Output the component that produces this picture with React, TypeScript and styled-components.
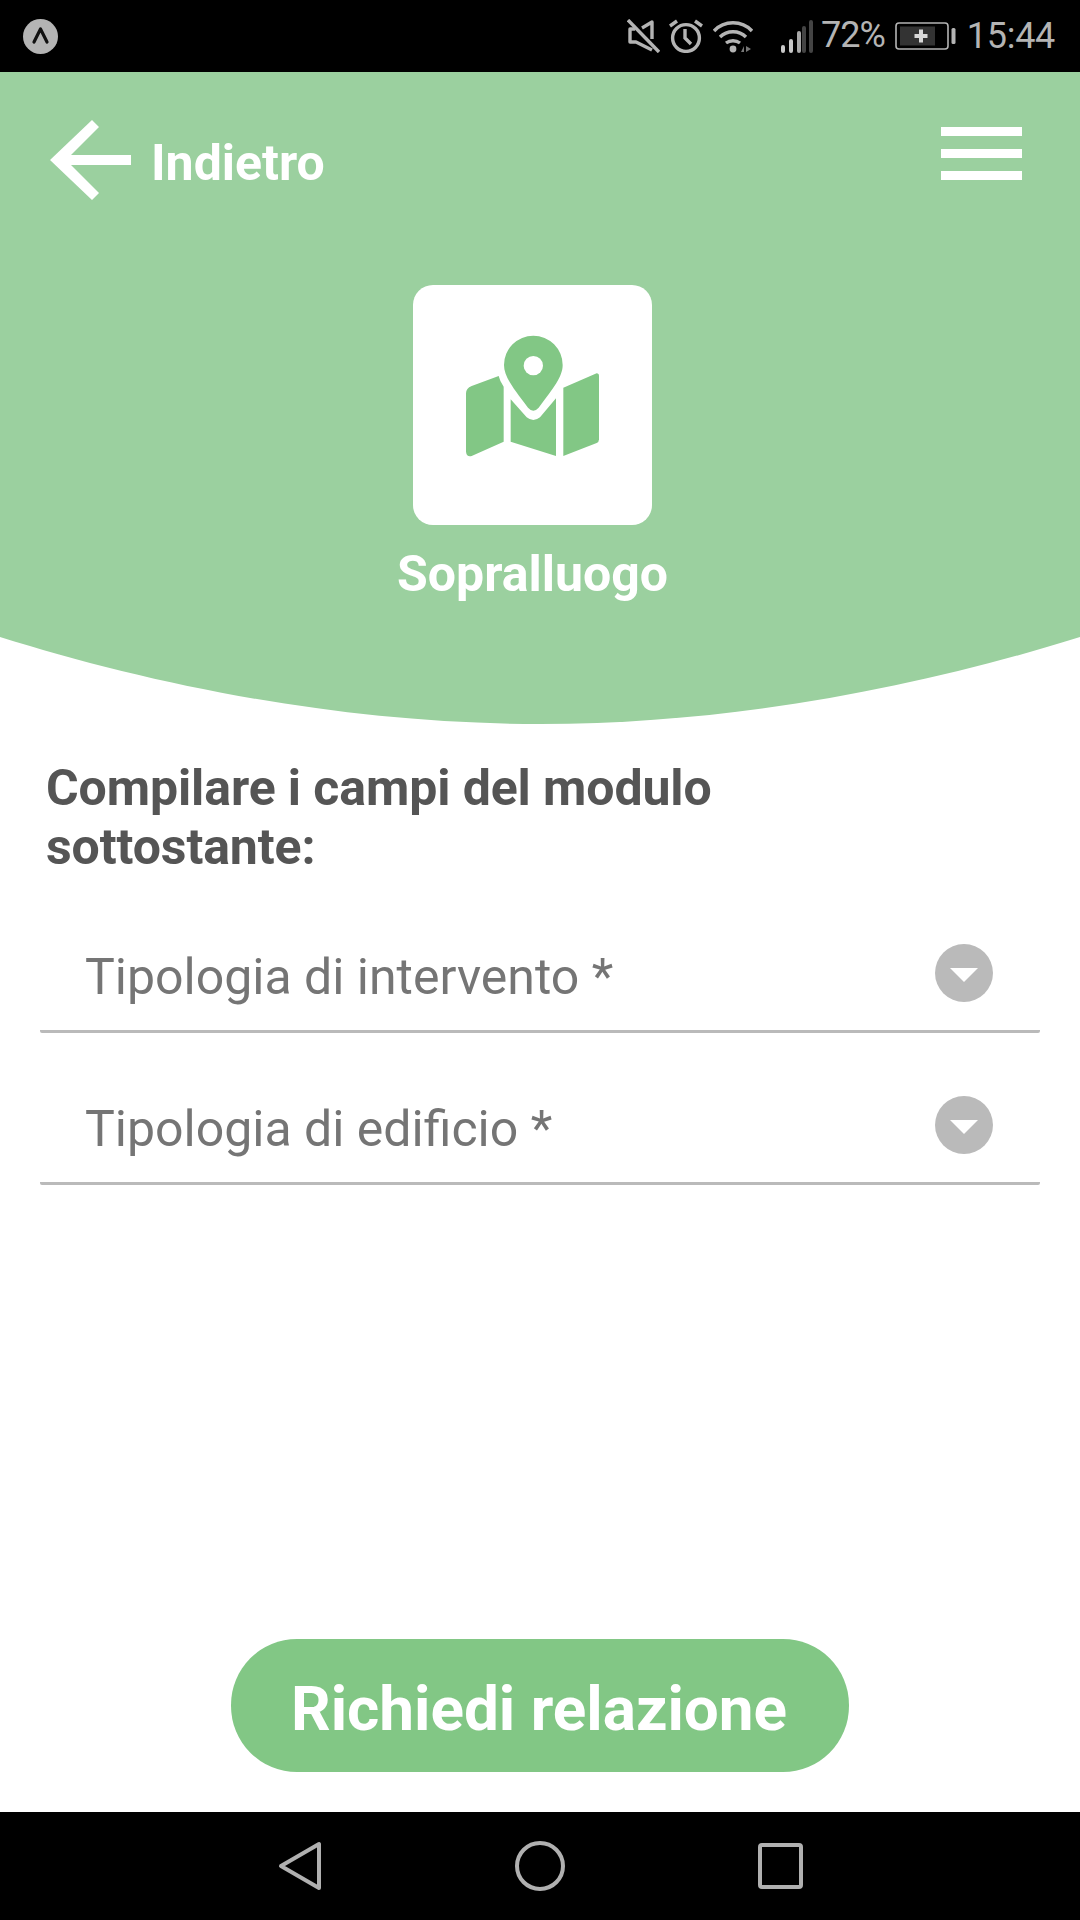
import { ReactElement } from "react";
import styled, { createGlobalStyle } from "styled-components";

const green = "#9bd09f";
const darkGreen = "#82c785";
const statusGrey = "#b4b4b4";

const GlobalStyle = createGlobalStyle`
    html, body {
        margin: 0;
        padding: 0;
        background: #fff;
    }
    * {
        box-sizing: border-box;
    }
`;

const Page = styled.div`
    width: 1080px;
    height: 1920px;
    display: flex;
    flex-direction: column;
    overflow: hidden;
    background: #fff;
    font-family: Roboto, "Liberation Sans", sans-serif;
`;

const StatusBar = styled.div`
    height: 72px;
    flex: none;
    background: #000;
    display: flex;
    align-items: center;
    justify-content: space-between;
    padding: 0 25px 0 23px;
`;

const StatusGroup = styled.div`
    display: flex;
    align-items: center;
`;

const StatusIcon = styled.svg<{ $gap?: number }>`
    display: block;
    flex: none;
    margin-right: ${(p) => p.$gap ?? 0}px;
`;

const Percent = styled.span`
    font-size: 36px;
    font-weight: 400;
    color: ${statusGrey};
    margin: -3px 10px 0 7px;
    letter-spacing: -1px;
`;

const Clock = styled.span`
    font-size: 36px;
    font-weight: 400;
    color: ${statusGrey};
    margin-left: 11px;
    letter-spacing: -0.3px;
`;

const Header = styled.header`
    flex: none;
    background: ${green};
    height: 565px;
    display: flex;
    flex-direction: column;
`;

const TopRow = styled.div`
    display: flex;
    align-items: flex-start;
    justify-content: space-between;
    padding: 48px 58px 0 50px;
    height: 128px;
`;

const BackLink = styled.div`
    display: flex;
    align-items: center;
    gap: 20px;
    height: 80px;
    color: #fff;
    font-size: 50px;
    line-height: 72px;
    font-weight: 700;
`;

const BackArrow = styled.svg`
    display: block;
    flex: none;
`;

const BackText = styled.span`
    display: block;
    margin-top: 6px;
`;

const MenuButton = styled.div`
    width: 81px;
    margin-top: 7px;
    display: flex;
    flex-direction: column;
    gap: 13px;
`;

const MenuBar = styled.span`
    display: block;
    height: 9px;
    background: #fff;
`;

const Hero = styled.div`
    display: flex;
    flex-direction: column;
    align-items: center;
    padding: 85px 15px 0 0;
`;

const IconCard = styled.div`
    width: 239px;
    height: 240px;
    background: #fff;
    border-radius: 20px;
    display: flex;
    align-items: center;
    justify-content: center;
    padding-bottom: 18px;
`;

const HeroTitle = styled.h1`
    margin: 18px 0 0;
    color: #fff;
    font-size: 50px;
    line-height: 62px;
    font-weight: 700;
`;

const Curve = styled.svg`
    display: block;
    flex: none;
`;

const Main = styled.main`
    flex: 1;
    display: flex;
    flex-direction: column;
    padding: 35px 40px 40px;
`;

const Heading = styled.h2`
    margin: 0 0 4px 6px;
    color: #555;
    font-size: 50px;
    line-height: 59px;
    font-weight: 700;
    letter-spacing: -0.1px;
`;

const SelectRow = styled.div`
    height: 152px;
    flex: none;
    display: flex;
    align-items: flex-end;
    justify-content: space-between;
    padding: 0 47px 28px 45px;
    border-bottom: 3px solid #bababa;
    border-radius: 0 0 2px 2px;
`;

const SelectLabel = styled.span`
    color: #757575;
    font-size: 50px;
    line-height: 50px;
`;

const SelectCaret = styled.span`
    width: 58px;
    height: 58px;
    border-radius: 50%;
    background: #bababa;
    display: flex;
    align-items: center;
    justify-content: center;
    &::after {
        content: "";
        width: 0;
        height: 0;
        margin-top: 4px;
        border-left: 14px solid transparent;
        border-right: 14px solid transparent;
        border-top: 14px solid #fff;
    }
`;

const SubmitButton = styled.button`
    margin: auto auto 0;
    width: 618px;
    height: 133px;
    border: none;
    border-radius: 66px;
    background: ${darkGreen};
    color: #fff;
    font-family: inherit;
    font-size: 62px;
    font-weight: 700;
    padding: 5px 2px 0 0;
`;

const NavBar = styled.nav`
    height: 108px;
    flex: none;
    background: #000;
    display: flex;
    align-items: center;
    justify-content: center;
    gap: 193px;
`;

const icons = {
    mute: (
        <StatusIcon width="33" height="34" viewBox="0 0 33 34" fill="none" stroke={statusGrey} strokeWidth="3.4" $gap={9}>
            <path d="M1 1l31 32" />
            <path d="M8 10H3v13h6l16 8M25 20V3l-10 6" strokeLinejoin="round" />
        </StatusIcon>
    ),
    alarm: (
        <StatusIcon width="34" height="34" viewBox="0 0 34 34" fill="none" stroke={statusGrey} strokeWidth="3.4" $gap={10}>
            <circle cx="17" cy="19" r="13.4" />
            <path d="M16 10v9l6 6M1 7l7-5M33 7l-7-5" />
        </StatusIcon>
    ),
    wifi: (
        <StatusIcon width="40" height="33" viewBox="0 0 40 33" fill="none" stroke={statusGrey} strokeWidth="3.4" $gap={27}>
            <path d="M1 11C11 0 29 0 39 11M7 17c7-7 19-7 26 0M13 23c4-3 10-3 14 0" />
            <circle cx="20" cy="29" r="3.4" fill={statusGrey} stroke="none" />
            <path d="M28 32l3-6v6zM33 26v6l5-3z" fill="#777" stroke="none" />
        </StatusIcon>
    ),
    signal: (
        <StatusIcon width="34" height="33" viewBox="0 0 34 33" fill="none" strokeWidth="4" strokeLinecap="round">
            <path d="M3 27v4M11 21v10" stroke="#c8c8c8" />
            <path d="M19 13v18" stroke="#a8a8a8" />
            <path d="M24 8v23M31 2v29" stroke="#444" />
        </StatusIcon>
    ),
    battery: (
        <StatusIcon width="61" height="28" viewBox="0 0 61 28">
            <rect x="1" y="1" width="52" height="26" rx="3" fill="none" stroke={statusGrey} strokeWidth="1.6" />
            <rect x="5" y="4.5" width="35" height="19" fill="#333" />
            <path d="M24 7.5h4v4.5h4.5v4H28v4.5h-4V16h-4.5v-4H24z" fill="#d8d8d8" />
            <rect x="56.5" y="6" width="4" height="16" rx="1.5" fill={statusGrey} />
        </StatusIcon>
    ),
};

const selects: Array<string> = ["Tipologia di intervento *", "Tipologia di edificio *"];

export default function App(): ReactElement {
    return (
        <Page>
            <GlobalStyle />
            <StatusBar>
                <StatusIcon width="35" height="35" viewBox="0 0 35 35">
                    <circle cx="17.5" cy="17.5" r="17.5" fill={statusGrey} />
                    <path d="M11 23l6.5-13L24 23" fill="none" stroke="#111" strokeWidth="3.2" strokeLinecap="round" strokeLinejoin="round" />
                </StatusIcon>
                <StatusGroup>
                    {icons.mute}
                    {icons.alarm}
                    {icons.wifi}
                    {icons.signal}
                    <Percent>72%</Percent>
                    {icons.battery}
                    <Clock>15:44</Clock>
                </StatusGroup>
            </StatusBar>
            <Header>
                <TopRow>
                    <BackLink>
                        <BackArrow width="81" height="80" viewBox="0 0 81 80" fill="#fff">
                            <path d="M42 0l7 7L21 35h60v10H21l28 28-7 7L0 40z" />
                        </BackArrow>
                        <BackText>Indietro</BackText>
                    </BackLink>
                    <MenuButton>
                        <MenuBar />
                        <MenuBar />
                        <MenuBar />
                    </MenuButton>
                </TopRow>
                <Hero>
                    <IconCard>
                        <svg width="135" height="122" viewBox="225 195 405 366" fill={darkGreen}>
                            <path d="M430 197a88 88 0 0 1 88 88c0 35-28 70-72 128q-16 18-32 0C370 355 342 320 342 285a88 88 0 0 1 88-88z" />
                            <circle cx="430" cy="287" r="29" fill="#fff" />
                            <path d="M326 318l-81 30q-17 7-17 22v175q2 17 17 13l96-43V350q-11-15-15-32z" />
                            <path d="M362 388l48 54q20 16 40 0l48-57v173l-136-43z" />
                            <path d="M520 353l100-43q7 0 7 8v190q0 8-7 11l-100 39z" />
                        </svg>
                    </IconCard>
                    <HeroTitle>Sopralluogo</HeroTitle>
                </Hero>
            </Header>
            <Curve width="1080" height="87" viewBox="0 0 1080 87">
                <path d="M0 0C150 47 340 87 540 87S930 47 1080 0Z" fill={green} />
            </Curve>
            <Main>
                <Heading>
                    Compilare i campi del modulo
                    <br />
                    sottostante:
                </Heading>
                {selects.map((label: string) => (
                    <SelectRow key={label}>
                        <SelectLabel>{label}</SelectLabel>
                        <SelectCaret />
                    </SelectRow>
                ))}
                <SubmitButton>Richiedi relazione</SubmitButton>
            </Main>
            <NavBar>
                <svg width="44" height="50" viewBox="0 0 44 50" fill="none" stroke="#b0b0b0" strokeWidth="4" strokeLinejoin="round">
                    <path d="M41 3v44L3 25z" />
                </svg>
                <svg width="50" height="50" viewBox="0 0 50 50" fill="none" stroke="#b0b0b0" strokeWidth="4">
                    <circle cx="25" cy="25" r="23" />
                </svg>
                <svg width="45" height="46" viewBox="0 0 45 46" fill="none" stroke="#b0b0b0" strokeWidth="4" strokeLinejoin="round">
                    <rect x="2" y="2" width="41" height="42" rx="2" />
                </svg>
            </NavBar>
        </Page>
    );
}
